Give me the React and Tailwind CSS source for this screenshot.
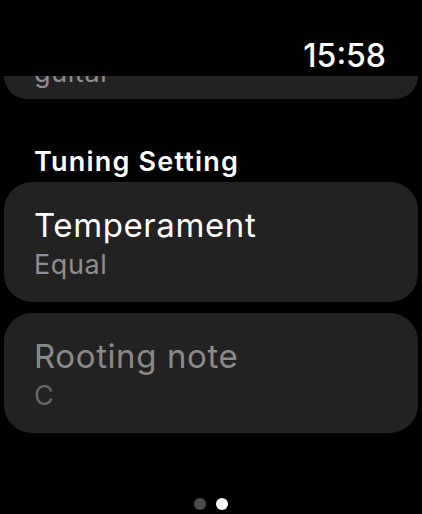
import React from 'react';

function Row({ title, value, disabled }) {
    return (
        <div className="mx-[4px] h-[120px] rounded-[28px] bg-[#222222] px-[30px] pt-[23px]">
            <div className={`text-[33px] leading-[40px] tracking-[0.6px] ${disabled ? 'text-[#8a8a8a]' : 'text-white'}`}>{title}</div>
            <div className={`mt-[4px] text-[27px] leading-[32px] tracking-[0.6px] ${disabled ? 'text-[#666666]' : 'text-[#8e8e93]'}`}>{value}</div>
        </div>
    );
}

export default function App() {
    return (
        <div className="w-[422px] h-[514px] bg-black overflow-hidden flex flex-col font-['Inter',sans-serif]">
            <div className="h-[76px] flex items-end justify-end pr-[36px]">
                <span className="text-white text-[32px] leading-[40px] font-medium">15:58</span>
            </div>

            {/* previous card, scrolled under the clock */}
            <div className="mx-[4px] h-[23px] rounded-b-[28px] bg-[#222222] overflow-hidden px-[30px]">
                <div className="text-[27px] leading-[32px] tracking-[0.6px] text-[#8e8e93] -mt-[19px]">guitar</div>
            </div>

            <div className="px-[34px] pt-[47px] pb-[4px] text-white text-[27px] leading-[32px] tracking-[1.2px] font-semibold">Tuning Setting</div>

            <div className="flex flex-col gap-[11px]">
                <Row title="Temperament" value="Equal" />
                <Row title="Rooting note" value="C" disabled />
            </div>

            <div className="mt-auto mb-[4px] flex justify-center gap-[10px]">
                <span className="w-[12px] h-[12px] rounded-full bg-[#4a4a4a]" />
                <span className="w-[12px] h-[12px] rounded-full bg-white" />
            </div>
        </div>
    );
}
